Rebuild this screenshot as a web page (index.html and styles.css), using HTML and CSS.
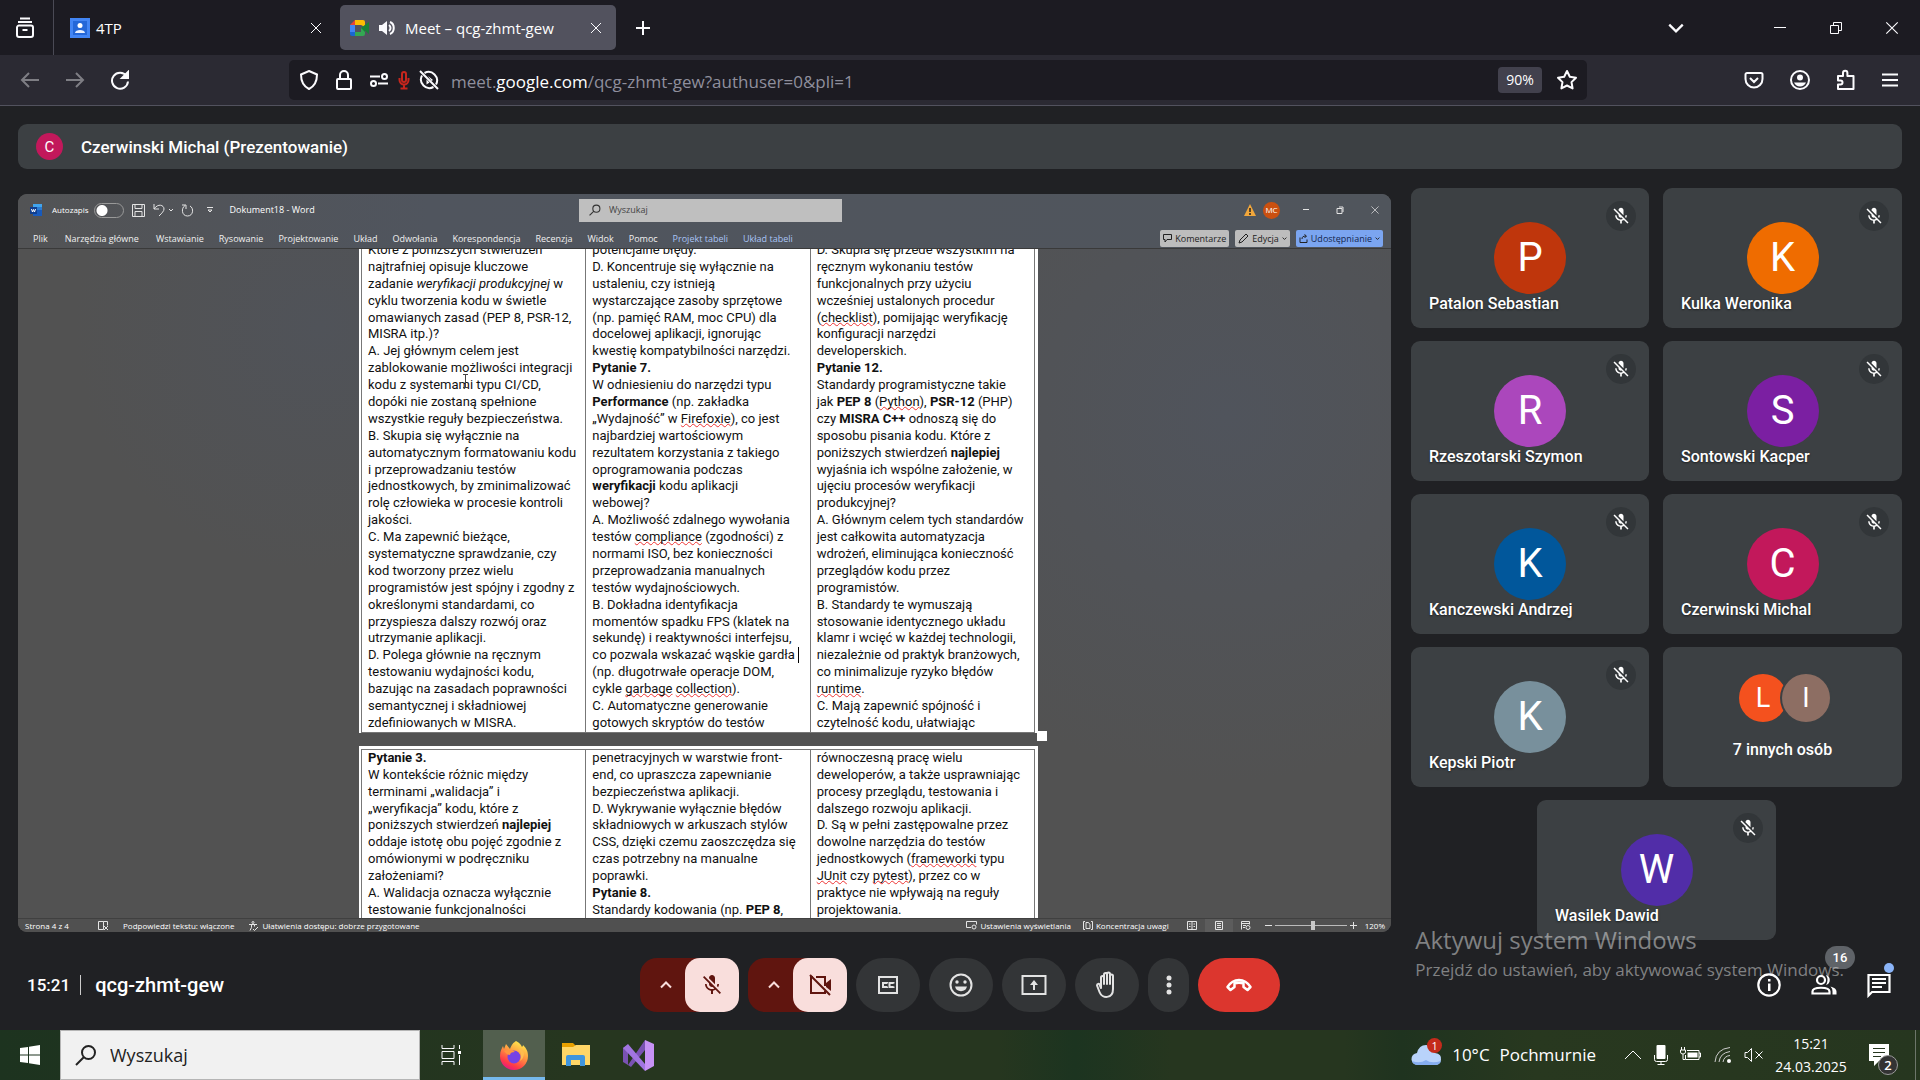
FILE: index.html
```html
<!DOCTYPE html>
<html lang="pl">
<head>
<meta charset="utf-8">
<meta name="viewport" content="width=device-width, initial-scale=1">
<title>Meet – qcg-zhmt-gew</title>
<link rel="stylesheet" href="styles.css">
</head>
<body>
<svg class="defs" aria-hidden="true">
  <symbol id="mic-off" viewBox="0 0 24 24"><path d="M19 11h-1.700c0 .74-.16 1.430-.43 2.050l1.230 1.230c.56-.98.9-2.090.9-3.280zm-4.020.170c0-.06.020-.110.020-.170V5c0-1.660-1.340-3-3-3S9 3.340 9 5v.180l5.980 5.990zM4.270 3 3 4.270l6.010 6.010V11c0 1.660 1.330 3 2.990 3 .22 0 .44-.03.65-.08l1.660 1.660c-.71.33-1.500.52-2.310.52-2.760 0-5.300-2.100-5.300-5.100H5c0 3.410 2.720 6.230 6 6.720V21h2v-3.280c.91-.13 1.770-.45 2.540-.9L19.730 21 21 19.730 4.270 3z"/></symbol>
  <symbol id="x" viewBox="0 0 14 14"><path d="m2 2 10 10M12 2 2 12"/></symbol>
  <symbol id="up" viewBox="0 0 16 16"><path d="m3 10.500 5-5 5 5"/></symbol>
  <symbol id="down" viewBox="0 0 16 16"><path d="m2 5 6 6 6-6"/></symbol>
  <symbol id="restore" viewBox="0 0 14 14"><path d="M1.500 4.500h8v8h-8zM4.500 4.500v-3h8v8h-3"/></symbol>
  <symbol id="loupe" viewBox="0 0 22 22"><circle cx="13.500" cy="8.500" r="6.500"/><path d="m9 13-8 8"/></symbol>
</svg>

<header class="browser">
  <div class="tabs">
    <button class="view" aria-label="Firefox View"><svg class="line" width="20" height="24" viewBox="0 0 20 24"><path d="M5 2.500h10M3 6h14M4 9.500h12a2 2 0 0 1 2 2V19a2 2 0 0 1-2 2H4a2 2 0 0 1-2-2v-7.500a2 2 0 0 1 2-2zM7.500 14h5"/></svg></button>
    <div class="tab">
      <svg width="20" height="20" viewBox="0 0 20 20"><path fill="#4285f4" d="M0 0h20v20H0z"/><path fill="#2467d8" d="M3 3h14v14H3z"/><circle cx="10" cy="7.500" r="2.500" fill="#fff"/><path fill="#e8f0fe" d="M5 15c0-4 10-4 10 0z"/></svg>
      <span class="tab-title">4TP</span>
      <button aria-label="Zamknij kartę"><svg class="line" width="14" height="14"><use href="#x"/></svg></button>
    </div>
    <div class="tab active">
      <svg width="20" height="20" viewBox="0 0 20 20"><path fill="#ea4335" d="M0 7 5 2v5z"/><path fill="#fbbc04" d="M5 2h8a2 2 0 0 1 2 2v5l-4-2H5z"/><path fill="#4285f4" d="M0 7h5v7H0z"/><path fill="#1967d2" d="M0 14h5v4H2a2 2 0 0 1-2-2z"/><path fill="#34a853" d="M5 14h6v-4l4-3v9a2 2 0 0 1-2 2H5z"/><path fill="#188038" d="m11 10 8-6v12l-4-3.500V14z"/></svg>
      <svg class="speaker" width="18" height="18" viewBox="0 0 18 18"><path fill="#fbfbfe" d="M1 6h3l5-4v14l-5-4H1z"/><path class="stroke" d="M11 6c2 1.500 2 4.500 0 6M12 3c5 2 5 10 0 12"/></svg>
      <span class="tab-title">Meet – qcg-zhmt-gew</span>
      <button aria-label="Zamknij kartę"><svg class="line" width="14" height="14"><use href="#x"/></svg></button>
    </div>
    <button class="new-tab" aria-label="Nowa karta"><svg class="line" width="16" height="16" viewBox="0 0 16 16"><path d="M8 1v14M1 8h14"/></svg></button>
    <div class="window-buttons">
      <button class="list" aria-label="Lista kart"><svg class="line" width="18" height="18"><use href="#down"/></svg></button>
      <button aria-label="Minimalizuj"><svg class="line thin" width="14" height="14" viewBox="0 0 14 14"><path d="M1 6.500h12"/></svg></button>
      <button aria-label="Przywróć"><svg class="line thin" width="14" height="14"><use href="#restore"/></svg></button>
      <button aria-label="Zamknij"><svg class="line thin" width="16" height="16"><use href="#x"/></svg></button>
    </div>
  </div>
  <nav class="toolbar">
    <div class="history">
      <button class="dim" aria-label="Wstecz"><svg class="line" width="20" height="18" viewBox="0 0 20 18"><path d="M19 9H2M9 2 2 9l7 7"/></svg></button>
      <button class="dim" aria-label="Dalej"><svg class="line" width="20" height="18" viewBox="0 0 20 18"><path d="M1 9h17M11 2l7 7-7 7"/></svg></button>
      <button aria-label="Odśwież"><svg class="line" width="20" height="20" viewBox="0 0 20 20"><path d="M16.500 6A8 8 0 1 0 18 11.500"/><path fill="#fbfbfe" d="M18 2v6h-6z"/></svg></button>
    </div>
    <div class="url">
      <svg class="line" width="20" height="20" viewBox="0 0 20 20"><path d="m10 1 8 3.500C18 12 15 16.500 10 19 5 16.500 2 12 2 4.500z"/></svg>
      <svg class="line lock" width="18" height="20" viewBox="0 0 18 20"><path d="M5 9V5a4 4 0 0 1 8 0v4M3 9h12a1 1 0 0 1 1 1v8a1 1 0 0 1-1 1H3a1 1 0 0 1-1-1v-8a1 1 0 0 1 1-1z"/></svg>
      <svg class="line" width="20" height="16" viewBox="0 0 20 16"><path d="M1 4.500h10M9 11.500h10"/><circle cx="15.500" cy="4.500" r="2.500"/><circle cx="4.500" cy="11.500" r="2.500"/></svg>
      <svg class="perm-mic" width="12" height="20" viewBox="0 0 12 20"><path d="M6 2a2 2 0 0 1 2 2v6a2 2 0 0 1-4 0V4a2 2 0 0 1 2-2zM1.500 8v2a4.500 4.500 0 0 0 9 0V8M6 14.500V18M2.500 18.500h7"/></svg>
      <svg class="line" width="20" height="20" viewBox="0 0 20 20"><path d="M5.500 3A8.500 8.500 0 0 1 17 14.500M14.500 17A8.500 8.500 0 0 1 3 5.500M1 1l18 18"/><path fill="#fbfbfe" stroke="none" d="m9 6 5 4-1.500 1zM7.500 9.500v5l3-2z"/></svg>
      <div class="address"><span class="dim-text">meet.</span>google.com<span class="dim-text">/qcg-zhmt-gew?authuser=0&amp;pli=1</span></div>
      <button class="zoom">90%</button>
      <button aria-label="Dodaj zakładkę"><svg class="line" width="22" height="22" viewBox="0 0 22 22"><path stroke-linejoin="round" d="m11 2 2.800 5.800 6.200.9-4.500 4.400 1.100 6.300L11 16.500l-5.600 2.900 1.100-6.300L2 8.700l6.200-.9z"/></svg></button>
    </div>
    <div class="extras">
      <button aria-label="Pocket"><svg class="line" width="20" height="20" viewBox="0 0 20 20"><path d="M3 3h14a1.500 1.500 0 0 1 1.500 1.500V9a8.500 8.500 0 0 1-17 0V4.500A1.500 1.500 0 0 1 3 3zM6 8l4 4 4-4"/></svg></button>
      <button aria-label="Konto"><svg class="line" width="22" height="22" viewBox="0 0 22 22"><circle cx="11" cy="11" r="9"/><circle cx="11" cy="8.500" r="3" fill="#fbfbfe" stroke="none"/><path fill="#fbfbfe" stroke="none" d="M5 13.500h12q-2 4-6 4t-6-4z"/></svg></button>
      <button aria-label="Rozszerzenia"><svg class="line" width="20" height="22" viewBox="0 0 20 22"><path stroke-linejoin="round" d="M2 20V15.500h2.500a2 2 0 0 0 0-4H2V7h5V4a2.200 2.200 0 0 1 4.400 0v3H17.500v13z"/></svg></button>
      <button aria-label="Menu"><svg class="line" width="18" height="16" viewBox="0 0 18 16"><path d="M1 2.500h16M1 8h16M1 13.500h16"/></svg></button>
    </div>
  </nav>
</header>

<main class="meet">
  <section class="presenter"><span class="avatar small">C</span><h1>Czerwinski Michal (Prezentowanie)</h1></section>

  <div class="stage">
    <section class="word" aria-label="Dokument18 - Word">
      <div class="word-title">
        <div class="quick">
          <svg width="12" height="12" viewBox="0 0 12 12"><path fill="#41a5ee" d="M3 0h9v3H3z"/><path fill="#2b7cd3" d="M3 3h9v3H3z"/><path fill="#185abd" d="M3 6h9v6H3z"/><path fill="#103f91" d="M0 3h7v7H0z"/><path stroke="#fff" fill="none" d="m1.500 5 1 3 1-2.500 1 2.500 1-3"/></svg>
          <label class="autosave">Autozapis <input type="checkbox" class="toggle"></label>
          <svg class="line word-icon" width="13" height="13" viewBox="0 0 13 13"><path d="M.5.500h12v12H.5zM3 .5v4h7v-4M3 12.500v-5h7v5"/></svg>
          <svg class="line word-icon undo" width="20" height="14" viewBox="0 0 20 14"><path d="M1 1v5h5M1 6c4-6 10-4 10 0 0 2-2 4-5 7M16 6l2 2 2-2"/></svg>
          <svg class="line word-icon" width="13" height="13" viewBox="0 0 13 13"><path d="M1 1h4v4M4 1.500C0 4 .5 12 6.500 12S13 4 9 2"/></svg>
          <svg class="line word-icon" width="6" height="6" viewBox="0 0 6 6"><path d="M0 .5h6M1 3l2 2 2-2z"/></svg>
          <span class="doc-name">Dokument18 - Word</span>
        </div>
        <label class="word-search"><svg width="12" height="12"><use href="#loupe"/></svg><input type="text" placeholder="Wyszukaj" aria-label="Wyszukaj w Wordzie"></label>
        <div class="word-window">
          <svg width="12" height="12" viewBox="0 0 12 12"><path fill="#f2a73b" d="M6 0 12 12H0z"/><path stroke="#222" stroke-width="1.500" d="M6 4v4M6 9v2"/></svg>
          <span class="mc">MC</span>
          <svg class="line word-icon" width="8" height="8" viewBox="0 0 8 8"><path d="M1 3.500h6"/></svg>
          <svg class="line word-icon" width="8" height="8" viewBox="0 0 8 8"><path d="M1 2.500h5v5H1zM3 1h4v5"/></svg>
          <svg class="line word-icon" width="10" height="10"><use href="#x"/></svg>
        </div>
      </div>
      <div class="ribbon">
        <nav>
          <a href="#">Plik</a><a href="#">Narzędzia główne</a><a href="#">Wstawianie</a><a href="#">Rysowanie</a><a href="#">Projektowanie</a><a href="#">Układ</a><a href="#">Odwołania</a><a href="#">Korespondencja</a><a href="#">Recenzja</a><a href="#">Widok</a><a href="#">Pomoc</a><a href="#" class="context">Projekt tabeli</a><a href="#" class="context">Układ tabeli</a>
        </nav>
        <div class="ribbon-buttons">
          <button><svg width="9" height="9" viewBox="0 0 9 9"><path d="M.5.500h8v5H4L2 8V5.500H.5z"/></svg>Komentarze</button>
          <button><svg width="11" height="11" viewBox="0 0 11 11"><path d="m1 10 1-3 6-6 2 2-6 6z"/></svg>Edycja<svg width="5" height="5"><use href="#down"/></svg></button>
          <button class="share"><svg width="9" height="9" viewBox="0 0 9 9"><path d="M1 3.500V8.500h7v-3M3 5c0-2 1-3 4-3M5.500.5 7.500 2 5.500 4"/></svg>Udostępnianie<svg width="5" height="5"><use href="#down"/></svg></button>
        </div>
      </div>

      <div class="canvas">
        <article class="page first">
          <table>
            <tr>
              <td>Które z poniższych stwierdzeń<br>najtrafniej opisuje kluczowe<br>zadanie <i>weryfikacji produkcyjnej</i> w<br>cyklu tworzenia kodu w świetle<br>omawianych zasad (PEP 8, PSR-12,<br>MISRA itp.)?<br>A. Jej głównym celem jest<br>zablokowanie możliwości integracji<br>kodu z systemami typu CI/CD,<br>dopóki nie zostaną spełnione<br>wszystkie reguły bezpieczeństwa.<br>B. Skupia się wyłącznie na<br>automatycznym formatowaniu kodu<br>i przeprowadzaniu testów<br>jednostkowych, by zminimalizować<br>rolę człowieka w procesie kontroli<br>jakości.<br>C. Ma zapewnić bieżące,<br>systematyczne sprawdzanie, czy<br>kod tworzony przez wielu<br>programistów jest spójny i zgodny z<br>określonymi standardami, co<br>przyspiesza dalszy rozwój oraz<br>utrzymanie aplikacji.<br>D. Polega głównie na ręcznym<br>testowaniu wydajności kodu,<br>bazując na zasadach poprawności<br>semantycznej i składniowej<br>zdefiniowanych w MISRA.</td>
              <td>potencjalne błędy.<br>D. Koncentruje się wyłącznie na<br>ustaleniu, czy istnieją<br>wystarczające zasoby sprzętowe<br>(np. pamięć RAM, moc CPU) dla<br>docelowej aplikacji, ignorując<br>kwestię kompatybilności narzędzi.<br><b>Pytanie 7.</b><br>W odniesieniu do narzędzi typu<br><b>Performance</b> (np. zakładka<br>„Wydajność” w <u>Firefoxie</u>), co jest<br>najbardziej wartościowym<br>rezultatem korzystania z takiego<br>oprogramowania podczas<br><b>weryfikacji</b> kodu aplikacji<br>webowej?<br>A. Możliwość zdalnego wywołania<br>testów <u>compliance</u> (zgodności) z<br>normami ISO, bez konieczności<br>przeprowadzania manualnych<br>testów wydajnościowych.<br>B. Dokładna identyfikacja<br>momentów spadku FPS (klatek na<br>sekundę) i reaktywności interfejsu,<br>co pozwala wskazać wąskie gardła<span class="caret"></span><br>(np. długotrwałe operacje DOM,<br>cykle <u>garbage</u> <u>collection</u>).<br>C. Automatyczne generowanie<br>gotowych skryptów do testów</td>
              <td>D. Skupia się przede wszystkim na<br>ręcznym wykonaniu testów<br>funkcjonalnych przy użyciu<br>wcześniej ustalonych procedur<br>(<u>checklist</u>), pomijając weryfikację<br>konfiguracji narzędzi<br>developerskich.<br><b>Pytanie 12.</b><br>Standardy programistyczne takie<br>jak <b>PEP 8</b> (<u>Python</u>), <b>PSR-12</b> (PHP)<br>czy <b>MISRA C++</b> odnoszą się do<br>sposobu pisania kodu. Które z<br>poniższych stwierdzeń <b>najlepiej</b><br>wyjaśnia ich wspólne założenie, w<br>ujęciu procesów weryfikacji<br>produkcyjnej?<br>A. Głównym celem tych standardów<br>jest całkowita automatyzacja<br>wdrożeń, eliminująca konieczność<br>przeglądów kodu przez<br>programistów.<br>B. Standardy te wymuszają<br>stosowanie identycznego układu<br>klamr i wcięć w każdej technologii,<br>niezależnie od praktyk branżowych,<br>co minimalizuje ryzyko błędów<br><u>runtime</u>.<br>C. Mają zapewnić spójność i<br>czytelność kodu, ułatwiając</td>
            </tr>
          </table>
          <svg class="ibeam" width="7" height="14" viewBox="0 0 7 14"><path d="M1 .5h5M3.500.5v13M1 13.500h5"/></svg>
          <span class="handle"></span>
        </article>
        <article class="page second">
          <table>
            <tr>
              <td><b>Pytanie 3.</b><br>W kontekście różnic między<br>terminami „walidacja” i<br>„weryfikacja” kodu, które z<br>poniższych stwierdzeń <b>najlepiej</b><br>oddaje istotę obu pojęć zgodnie z<br>omówionymi w podręczniku<br>założeniami?<br>A. Walidacja oznacza wyłącznie<br>testowanie funkcjonalności</td>
              <td>penetracyjnych w warstwie front-<br>end, co upraszcza zapewnianie<br>bezpieczeństwa aplikacji.<br>D. Wykrywanie wyłącznie błędów<br>składniowych w arkuszach stylów<br>CSS, dzięki czemu zaoszczędza się<br>czas potrzebny na manualne<br>poprawki.<br><b>Pytanie 8.</b><br>Standardy kodowania (np. <b>PEP 8</b>,</td>
              <td>równoczesną pracę wielu<br>deweloperów, a także usprawniając<br>procesy przeglądu, testowania i<br>dalszego rozwoju aplikacji.<br>D. Są w pełni zastępowalne przez<br>dowolne narzędzia do testów<br>jednostkowych (<u>frameworki</u> typu<br><u>JUnit</u> czy <u>pytest</u>), przez co w<br>praktyce nie wpływają na reguły<br>projektowania.</td>
            </tr>
          </table>
        </article>
      </div>

      <footer class="status">
        <span class="page-no">Strona 4 z 4</span>
        <svg class="line word-icon" width="11" height="9" viewBox="0 0 11 9"><path d="M.5.500h5v8h-5zM5.500.5h4v4M6 5l4 4M10 5 6 9"/></svg>
        <span class="hints">Podpowiedzi tekstu: włączone</span>
        <span class="with-icon"><svg class="line word-icon" width="11" height="10" viewBox="0 0 11 10"><circle cx="5" cy="1.500" r="1"/><path d="M1 3.500h8M3.500 3.500v3L2 9.500M6.500 3.500v2M5 8l1.500 1.500L10 6"/></svg>Ułatwienia dostępu: dobrze przygotowane</span>
        <span class="with-icon push"><svg class="line word-icon" width="11" height="9" viewBox="0 0 11 9"><path d="M5 6.500H.5v-6h10v3"/><circle cx="8" cy="6" r="2"/></svg>Ustawienia wyświetlania</span>
        <span class="with-icon focus"><svg class="line word-icon" width="10" height="9" viewBox="0 0 10 9"><path d="M2 .5H.5v8H2M8 .5h1.500v8H8M3 1.500h2.500l1.500 2v4H3z"/></svg>Koncentracja uwagi</span>
        <span class="views">
          <svg class="line word-icon" width="10" height="9" viewBox="0 0 10 9"><path d="M.5.500h9v8h-9zM5 .5v8M2 3h1.500M2 5.500h1.500M6.500 3H8M6.500 5.500H8"/></svg>
          <svg class="line word-icon on" width="28" height="13" viewBox="0 0 28 13"><path d="M10.500 2.500h7v8h-7zM12 4.500h4M12 6.500h4M12 8.500h4"/></svg>
          <svg class="line word-icon" width="10" height="9" viewBox="0 0 10 9"><path d="M.5 8.500v-8h8v3M.5 2.500h8M2 4.500h3M2 6.500h2"/><circle cx="7" cy="6.500" r="2"/></svg>
        </span>
        <span class="scale"><svg class="line word-icon" width="7" height="7" viewBox="0 0 7 7"><path d="M0 3.500h7"/></svg><input type="range" min="0" max="100" value="53" aria-label="Powiększenie"><svg class="line word-icon" width="7" height="7" viewBox="0 0 7 7"><path d="M0 3.500h7M3.500 0v7"/></svg></span>
        <span class="percent">120%</span>
      </footer>
    </section>

    <section class="people" aria-label="Uczestnicy">
      <div class="tile"><span class="avatar rust">P</span><span class="name">Patalon Sebastian</span><span class="muted"><svg width="20" height="20"><use href="#mic-off"/></svg></span></div>
      <div class="tile"><span class="avatar orange">K</span><span class="name">Kulka Weronika</span><span class="muted"><svg width="20" height="20"><use href="#mic-off"/></svg></span></div>
      <div class="tile"><span class="avatar orchid">R</span><span class="name">Rzeszotarski Szymon</span><span class="muted"><svg width="20" height="20"><use href="#mic-off"/></svg></span></div>
      <div class="tile"><span class="avatar purple">S</span><span class="name">Sontowski Kacper</span><span class="muted"><svg width="20" height="20"><use href="#mic-off"/></svg></span></div>
      <div class="tile"><span class="avatar blue">K</span><span class="name">Kanczewski Andrzej</span><span class="muted"><svg width="20" height="20"><use href="#mic-off"/></svg></span></div>
      <div class="tile"><span class="avatar">C</span><span class="name">Czerwinski Michal</span><span class="muted"><svg width="20" height="20"><use href="#mic-off"/></svg></span></div>
      <div class="tile"><span class="avatar slate">K</span><span class="name">Kepski Piotr</span><span class="muted"><svg width="20" height="20"><use href="#mic-off"/></svg></span></div>
      <div class="tile others"><div class="pair"><span class="avatar mid flame">L</span><span class="avatar mid brown">I</span></div><span>7 innych osób</span></div>
      <div class="tile last"><span class="avatar violet">W</span><span class="name">Wasilek Dawid</span><span class="muted"><svg width="20" height="20"><use href="#mic-off"/></svg></span></div>
    </section>
  </div>

  <footer class="controls">
    <div class="meeting"><time>15:21</time><span class="code">qcg-zhmt-gew</span></div>
    <div class="buttons">
      <div class="split"><button class="more-up" aria-label="Ustawienia dźwięku"><svg width="16" height="16"><use href="#up"/></svg></button><button class="off" aria-label="Włącz mikrofon"><svg width="24" height="24"><use href="#mic-off"/></svg></button></div>
      <div class="split"><button class="more-up" aria-label="Ustawienia wideo"><svg width="16" height="16"><use href="#up"/></svg></button><button class="off" aria-label="Włącz kamerę"><svg width="26" height="26" viewBox="0 0 26 26"><path fill="none" stroke="#60150f" stroke-width="2" d="M6 5H4v16h14v-2M9 5h9v9M3 3l20 20"/><path d="m19 11 5-4v12l-5-4z"/></svg></button></div>
      <button class="round" aria-label="Napisy"><svg width="24" height="24" viewBox="0 0 24 24"><path fill="none" stroke="#e3e3e3" stroke-width="2" d="M3 4h18v16H3z"/><path fill="none" stroke="#e3e3e3" stroke-width="2" d="M11 10.500V10H7v4h4v-.5M17.500 10.500V10h-4v4h4v-.5"/></svg></button>
      <button class="round" aria-label="Reakcje"><svg width="26" height="26" viewBox="0 0 26 26"><circle cx="13" cy="13" r="10.500" fill="none" stroke="#e3e3e3" stroke-width="2"/><circle cx="9" cy="10" r="1.700"/><circle cx="17" cy="10" r="1.700"/><path d="M7 14.500h12a6.200 6.200 0 0 1-12 0z"/></svg></button>
      <button class="round" aria-label="Zaprezentuj"><svg width="26" height="24" viewBox="0 0 26 24"><path fill="none" stroke="#e3e3e3" stroke-width="2" d="M1.500 3h23v18h-23z"/><path d="M12 17v-5H9l4-5 4 5h-3v5z"/></svg></button>
      <button class="round" aria-label="Podnieś rękę"><svg width="24" height="28" viewBox="0 0 24 28"><path fill="none" stroke="#e3e3e3" stroke-width="2" stroke-linejoin="round" d="M6 17V6.500a1.500 1.500 0 0 1 3 0V13 3.500a1.500 1.500 0 0 1 3 0V13 3a1.500 1.500 0 0 1 3 0v10V5a1.500 1.500 0 0 1 3 0v13c0 10-11 10-13.500 3L2 14.500c0-2 2-2 2.500-1z"/></svg></button>
      <button class="round narrow" aria-label="Więcej opcji"><svg width="8" height="20" viewBox="0 0 8 20"><circle cx="4" cy="3" r="2.500"/><circle cx="4" cy="10" r="2.500"/><circle cx="4" cy="17" r="2.500"/></svg></button>
      <button class="end" aria-label="Opuść rozmowę"><svg width="28" height="14" viewBox="0 0 28 14"><path fill="none" stroke="#fff" stroke-width="2.500" stroke-linejoin="round" d="M9.500 5.500Q14 4 18.500 5.500V9l4 3 3-3Q21 2 14 2T2.500 9l3 3 4-3z"/></svg></button>
    </div>
    <div class="side">
      <button aria-label="Szczegóły spotkania"><svg width="26" height="26" viewBox="0 0 26 26"><circle cx="13" cy="13" r="10.700" fill="none" stroke="#fff" stroke-width="2.200"/><path d="M12 11.500h2.500V19H12zM12 7h2.500v2.500H12z"/></svg></button>
      <button aria-label="Uczestnicy"><svg width="28" height="24" viewBox="0 0 28 24"><circle cx="11" cy="7" r="4" fill="none" stroke="#fff" stroke-width="2.200"/><path fill="none" stroke="#fff" stroke-width="2.200" d="M2.500 20.500v-2c0-5 17-5 17 0v2z"/><path d="M16 2a5.200 5.200 0 0 1 0 10q3-5 0-10zM20.500 13.500q6 1.500 6 5v3h-4v-3q0-3-2-5z"/></svg><span class="count">16</span></button>
      <button aria-label="Czat"><svg width="26" height="26" viewBox="0 0 26 26"><path fill="none" stroke="#fff" stroke-width="2.200" d="M2.500 3h21v17H6l-3.500 3.500z"/><path d="M6 6h14v2H6zM6 10h14v2H6zM6 14h10v2H6z"/></svg><span class="dot"></span></button>
    </div>
  </footer>
  <div class="watermark"><strong>Aktywuj system Windows</strong><span>Przejdź do ustawień, aby aktywować system Windows.</span></div>
</main>

<footer class="taskbar">
  <button class="start" aria-label="Start"><svg width="20" height="20" viewBox="0 0 20 20"><path fill="#fff" d="m0 3 8-1v7.500H0zM9 1.800 20 0v9.500H9zM0 10.500h8V18l-8-1zM9 10.500h11V20L9 18.200z"/></svg></button>
  <label class="find"><svg width="22" height="22"><use href="#loupe"/></svg><input type="text" placeholder="Wyszukaj" aria-label="Wyszukaj"></label>
  <button class="app task-view" aria-label="Widok zadań"><svg class="line thin" width="21" height="20" viewBox="0 0 21 20"><path d="M1 0v3.500h12V0M1 6.500h12v7H1zM1 20v-3.500h12V20M18.500 0v4M18.500 10v10"/><path fill="#fff" stroke="none" d="M17 6h3v3h-3z"/></svg></button>
  <button class="app running" aria-label="Firefox"><svg width="30" height="30" viewBox="0 0 30 30"><defs><linearGradient id="fx" x1=".8" y1="0" x2=".3" y2="1"><stop offset="0" stop-color="#fff44f"/><stop offset=".45" stop-color="#ff9640"/><stop offset=".8" stop-color="#ff3b47"/><stop offset="1" stop-color="#e31587"/></linearGradient></defs><path fill="url(#fx)" d="M17 1c4 2 5 4 6 6 1-1 1-2 1-2 4 4 5 7 5 11a14 14 0 0 1-28 0C1 11 3 8 4 6l1 3 2-5 4 5c2-5 3-6 6-8z"/><circle cx="15" cy="17" r="6.500" fill="#7542e5"/><path fill="#ff9640" d="M5 11q7-3 11 1-5 0-5 3-3 0-6-4z"/><path fill="#ffbd4f" d="M19 8q5 6 2 13 4-3 4-8-1-4-6-5z"/></svg></button>
  <button class="app" aria-label="Eksplorator plików"><svg width="28" height="26" viewBox="0 0 28 26"><path fill="#e8a000" d="M0 1h11l3 3v4H0z"/><path fill="#ffd667" d="M0 5h11l3-2h14v20H0z"/><path fill="#3f95dd" d="M4 24V15q0-2 2-2h15q2 0 2 2v9h-5v-6h-9v6z"/></svg></button>
  <button class="app" aria-label="Visual Studio"><svg width="31" height="31" viewBox="0 0 31 31"><path fill="#7a52b3" d="m0 8 5-3v20l-5-3zM5 25 22 0v10L8 27z"/><path fill="#a175e0" d="m0 8 5-4 17 20v7z"/><path fill="#c792f5" d="m22 0 9 4v22l-9 5z"/></svg></button>
  <div class="tray">
    <button class="weather"><span class="cloud"><svg width="31" height="22" viewBox="0 0 31 22"><path fill="#b9d3fb" d="M7 21a6 6 0 0 1-1-12Q8 1 15 1t9 8q7 1 6 7-1 5-6 5z"/><path fill="#86aef0" d="M7 21q-5 0-6-4 8 3 14-1 5 4 15 1-1 4-6 4z"/></svg><span class="alert">1</span></span><span>10°C</span><span>Pochmurnie</span></button>
    <div class="icons">
      <svg class="line thin" width="18" height="18" viewBox="0 0 18 18"><path d="m1 13 8-8 8 8"/></svg>
      <svg width="14" height="22" viewBox="0 0 14 22"><rect x="2.500" y="1" width="9" height="14" rx="1" fill="#fff"/><path fill="none" stroke="#fff" d="M.5 11v4.500q0 2 2 2h9q2 0 2-2V11M7 17v3M3.500 20.500h7"/></svg>
      <svg width="22" height="18" viewBox="0 0 22 18"><path fill="none" stroke="#fff" d="M7 4.500h12v9H5.500V9M19 7h1.500v4H19M1.500 1v3M4.500 1v3M.5 4h5v2q0 2-2.500 2T.5 6zM3 8v5.500h2"/><path fill="#fff" d="M7.500 6.500H17.500v5H7.500z"/></svg>
      <svg width="18" height="18" viewBox="0 0 18 18"><path fill="none" stroke="#ccc" d="M1 16Q2 3 16 1.500M5 16Q6 7 16 5.500M9 16q1-6 7-6.500"/><circle cx="15" cy="15" r="2" fill="#fff"/></svg>
      <svg class="line thin" width="20" height="16" viewBox="0 0 20 16"><path d="M1 5.500h2.500l4-4v13l-4-4H1zM11.500 4.500l7 7M18.500 4.500l-7 7"/></svg>
    </div>
    <div class="clock"><time>15:21</time><time>24.03.2025</time></div>
    <button class="notes" aria-label="Powiadomienia"><svg width="21" height="22" viewBox="0 0 21 22"><path fill="#fff" d="M0 0h20v17H10l-5 5v-5H0z"/><path stroke="#26361f" d="M4 4.500h12M4 8.500h12M4 12.500h8"/></svg><span class="note-count">2</span></button>
    <span class="desktop"></span>
  </div>
</footer>
</body>
</html>
```
FILE: styles.css
```css
* { box-sizing: border-box; }
body {
  margin: 0;
  min-height: 100vh;
  display: flex;
  flex-direction: column;
  background: #202124;
  color: #fff;
  font: 15px/20px "Open Sans", "Noto Sans", sans-serif;
  overflow-x: hidden;
}
button, input { margin: 0; padding: 0; border: 0; background: none; color: inherit; font: inherit; }
button { display: flex; align-items: center; justify-content: center; }
svg { display: block; flex: none; }
.defs { position: absolute; width: 0; height: 0; }
.line, .stroke { fill: none; stroke: #fbfbfe; stroke-width: 2; }
.line.thin { stroke-width: 1; }

/* Browser chrome */
.tabs { display: flex; align-items: center; height: 55px; background: #1c1b22; }
.view { width: 54px; height: 55px; padding-right: 3px; border-right: 1px solid #4a4a55; }
.tab { display: flex; align-items: center; width: 276px; height: 45px; margin: 0 0 0 4px; padding: 0 13px 0 10px; border-radius: 5px; }
.tab:nth-child(2) { margin-left: 6px; }
.tab.active { background: #52525e; }
.tab-title { flex: 1; margin-left: 6px; }
.tab .speaker { margin-left: 8px; }
.speaker + .tab-title { margin-left: 9px; }
.tab .line { stroke-width: 1; }
.new-tab { width: 54px; height: 45px; }
.window-buttons { display: flex; margin-left: auto; }
.window-buttons button { width: 56px; height: 55px; }
.window-buttons .list { margin-right: 48px; }
.toolbar { display: flex; align-items: center; height: 51px; background: #2b2a33; border-bottom: 1px solid #52525e; }
.history { display: flex; gap: 25px; width: 289px; padding-left: 20px; }
.dim { opacity: .4; }
.url { flex: 1; display: flex; align-items: center; gap: 6px; min-width: 0; height: 40px; padding: 0 9px 0 10px; background: #1c1b22; border-radius: 5px; }
.url .lock { margin: 0 10px; }
.perm-mic { margin: 0 3px; fill: none; stroke: #c5261d; stroke-width: 2; }
.address { flex: 1; margin-left: 6px; padding-top: 3px; font-size: 17px; line-height: 24px; white-space: nowrap; }
.dim-text { color: #8f8f9d; }
.zoom { width: 44px; height: 26px; margin-right: 8px; background: #42414d; border-radius: 4px; font-size: 14px; }
.extras { display: flex; gap: 25px; width: 333px; padding-right: 21px; justify-content: flex-end; }

/* Call */
.meet { position: relative; flex: 1; display: flex; flex-direction: column; padding: 18px 18px 0; font-family: Roboto, sans-serif; }
.presenter { display: flex; align-items: center; gap: 18px; height: 45px; padding-left: 18px; background: #3c4043; border-radius: 9px; }
.presenter h1 { margin: 0; font-size: 17px; font-weight: 500; }
.avatar { display: flex; align-items: center; justify-content: center; width: 72px; height: 72px; border-radius: 50%; background: #c2185b; font-size: 40px; }
.avatar.small { width: 27px; height: 27px; font-size: 15px; }
.avatar.mid { width: 48px; height: 48px; font-size: 27px; }
.rust { background: #bf360c; }
.orange { background: #ef6c00; }
.orchid { background: #ab47bc; }
.purple { background: #7b1fa2; }
.blue { background: #01579b; }
.slate { background: #78909c; }
.flame { background: #f4511e; }
.brown { background: #8d6e63; }
.violet { background: #512da8; }
.stage { display: flex; gap: 20px; padding-top: 19px; }

/* Shared Word window */
.word {
  flex: 1;
  min-width: 0;
  height: 738px;
  margin-top: 6px;
  display: flex;
  flex-direction: column;
  overflow: hidden;
  border-radius: 9px;
  background: radial-gradient(circle at 88% 30%, #50545c 0, transparent 28%), radial-gradient(circle at 22% 18%, #505359 0, transparent 20%), #525252;
  font: 9px/12px "Open Sans", "Noto Sans", sans-serif;
}
.word-title { display: grid; grid-template-columns: 1fr 263px 1fr; align-items: center; height: 32px; padding-left: 12px; background: linear-gradient(90deg, #525355, #50555e 30%, #50555c); }
.quick { display: flex; align-items: center; gap: 8px; }
.autosave { display: flex; align-items: center; gap: 5px; margin-left: 2px; font-size: 8px; }
.toggle { appearance: none; width: 30px; height: 15px; border: 1px solid #999; border-radius: 8px; background: radial-gradient(circle at 7px 50%, #fff 5px, transparent 6px); }
.word-icon { stroke: #e4e4e4; stroke-width: 1; }
.doc-name { margin-left: 9px; white-space: nowrap; }
.quick .word-icon:last-of-type { margin-left: 5px; }
.word-search { display: flex; align-items: center; gap: 8px; height: 23px; padding: 0 10px; background: #bfbfbf; color: #444; }
.word-search svg { fill: none; stroke: #333; stroke-width: 2; }
.word-search input { flex: 1; min-width: 0; }
.word-search input::placeholder, .find input::placeholder { color: inherit; opacity: 1; }
.word-window { display: flex; align-items: center; justify-content: flex-end; gap: 26px; padding-right: 11px; }
.word-window svg:first-child { margin-right: -19px; }
.mc { display: flex; align-items: center; justify-content: center; width: 17px; height: 17px; margin-right: -4px; border-radius: 50%; background: #ca5010; font-size: 8px; }
.ribbon { display: flex; align-items: center; justify-content: space-between; height: 23px; padding: 3px 8px 0 15px; background: linear-gradient(90deg, #525355, #50555e 30%, #50555c); border-bottom: 1px solid #3a3a3a; }
.ribbon nav { display: flex; gap: 15px; white-space: nowrap; }
.ribbon a { color: #f0f0f0; text-decoration: none; }
.ribbon a:nth-child(2) { margin: 0 2px; }
.ribbon .context { color: #a9c4f5; }
.ribbon-buttons { display: flex; gap: 6px; }
.ribbon-buttons button { height: 17px; padding: 0 3px; gap: 3px; background: #bdbdbd; border-radius: 2px; color: #222; }
.ribbon-buttons svg { fill: none; stroke: #222; stroke-width: 1; }
.ribbon-buttons svg:last-child:not(:first-child) { stroke-width: 3; }
.ribbon-buttons .share { background: #7ba5f0; color: #13264f; }
.canvas { flex: 1; min-height: 0; overflow: hidden; display: flex; flex-direction: column; align-items: center; gap: 13px; padding-right: 12px; }
.page { position: relative; flex: none; width: 679px; background: #fff; color: #111; }
.page table { width: 100%; table-layout: fixed; border-collapse: collapse; border: 1px solid #777; }
.page td { padding: 0 6px; border: 1px solid #777; font: 13px/1.3 Roboto, sans-serif; vertical-align: top; white-space: nowrap; }
.page.first { margin-top: -8px; padding: 0 3px 0 2px; }
.page.second { padding: 3px 3px 0 2px; }
.page.second table { border-top-color: #111; }
.page b { font-weight: 700; }
.page u { text-decoration: underline wavy #e33 1px; text-underline-offset: 0; text-decoration-skip-ink: none; }
.caret { display: inline-block; width: 1px; height: 16px; margin: -2px 0 -4px 3px; background: #000; }
.ibeam { position: absolute; left: 103px; top: 133px; stroke: #444; fill: none; }
.handle { position: absolute; right: -9px; bottom: -8px; width: 10px; height: 10px; background: #fff; }
.status { display: flex; align-items: center; height: 14px; padding: 0 6px 0 7px; background: #505050; border-top: 1px solid #404040; font-size: 8px; white-space: nowrap; }
.page-no { width: 73px; }
.hints { margin: 0 14px; }
.with-icon { display: flex; align-items: center; gap: 3px; }
.push { margin-left: auto; }
.focus { margin: 0 18px 0 12px; }
.views { display: flex; align-items: center; gap: 8px; margin-right: 14px; }
.views .on { background: #5c5c5c; }
.scale { display: flex; align-items: center; gap: 3px; margin-right: 8px; }
.scale input { appearance: none; width: 72px; height: 9px; background: linear-gradient(#bbb, #bbb) center / 100% 1px no-repeat; }
.scale input::-webkit-slider-thumb { appearance: none; width: 4px; height: 9px; background: #c8c8c8; }

/* Participants */
.people { flex: none; display: grid; grid-template-columns: 238px 239px; grid-auto-rows: 140px; gap: 13px 14px; }
.tile { position: relative; display: flex; align-items: center; justify-content: center; background: #3c4043; border-radius: 9px; font-size: 16px; font-weight: 500; }
.tile .avatar { font-weight: 400; }
.last { grid-column: 1 / -1; justify-self: center; width: 239px; }
.name { position: absolute; left: 18px; bottom: 14px; text-shadow: 0 1px 2px #0008; }
.muted { position: absolute; top: 13px; right: 13px; display: flex; align-items: center; justify-content: center; width: 30px; height: 30px; border-radius: 50%; background: #323639; fill: #fff; }
.others { flex-direction: column; gap: 18px; }
.pair { display: flex; margin-left: 4px; }
.pair .brown { margin-left: -5px; box-shadow: 0 0 0 2px #3c4043; }

/* Call controls */
.controls { flex: 1; display: grid; grid-template-columns: 1fr auto 1fr; align-items: center; }
.meeting { display: flex; align-items: center; padding-left: 9px; font-size: 20px; font-weight: 500; }
.meeting time { font-size: 17px; }
.code { margin-left: 10px; padding-left: 14px; border-left: 1px solid #ccc; }
.buttons { display: flex; gap: 9px; }
.split { display: flex; border-radius: 17px; background: #60150f; }
.more-up { width: 45px; height: 54px; padding-left: 7px; fill: none; stroke: #f9dedc; stroke-width: 2; }
.off { width: 54px; height: 54px; border-radius: 15px; background: #f9dedc; fill: #60150f; }
.round { width: 64px; height: 54px; border-radius: 27px; background: #333537; fill: #e3e3e3; }
.narrow { width: 41px; }
.end { width: 82px; height: 54px; border-radius: 27px; background: #dc362e; }
.side { display: flex; justify-content: flex-end; gap: 28px; padding-right: 10px; fill: #fff; }
.side button { position: relative; }
.count { position: absolute; left: 15px; top: -26px; width: 30px; height: 23px; border-radius: 12px; background: #5f6368; font-size: 13px; line-height: 23px; font-weight: 500; }
.dot { position: absolute; right: -2px; top: -9px; width: 10px; height: 10px; border-radius: 50%; background: #8ab4f8; }
.watermark { position: absolute; right: 76px; bottom: 48px; display: flex; flex-direction: column; gap: 2px; color: #ffffff70; font: 17px/24px "Open Sans", "Noto Sans", sans-serif; pointer-events: none; }
.watermark strong { font-size: 24px; line-height: 32px; font-weight: 400; }

/* Taskbar */
.taskbar { display: flex; height: 50px; background: linear-gradient(90deg, #1d331f, #26361f 30%, #26361f 52%, #1c3420 56%, #26361f 61%, #26361f 70%, #1f331f 73%, #28381f 80%, #26361f); }
.start { width: 60px; }
.find { display: flex; align-items: center; gap: 13px; width: 360px; padding: 0 14px; border: 1px solid #b5b5b5; background: #f1f1f1; color: #222; }
.find svg { fill: none; stroke: #222; stroke-width: 2; }
.find input { flex: 1; min-width: 0; height: 30px; font-size: 18px; }
.app { width: 62px; }
.task-view { margin-right: 1px; }
.running { background: #525f4e; border-bottom: 3px solid #76b9ed; padding-top: 3px; }
.tray { display: flex; align-items: center; margin-left: auto; }
.weather { gap: 10px; margin-right: 28px; font-size: 17px; }
.cloud { position: relative; }
.alert { position: absolute; right: 0; top: -6px; width: 15px; height: 15px; border-radius: 50%; background: #c42b1c; font-size: 11px; line-height: 15px; }
.icons { display: flex; align-items: center; gap: 12px; margin-right: 12px; }
.clock { display: flex; flex-direction: column; align-items: center; gap: 3px; width: 70px; font-size: 14px; }
.notes { position: relative; margin: 0 25px 0 23px; }
.note-count { position: absolute; right: -8px; bottom: -9px; width: 20px; height: 20px; border: 1px solid #999; border-radius: 50%; background: #333; font-size: 13px; line-height: 18px; font-weight: 600; }
.desktop { width: 5px; height: 50px; border-left: 1px solid #6d766a; }
```
